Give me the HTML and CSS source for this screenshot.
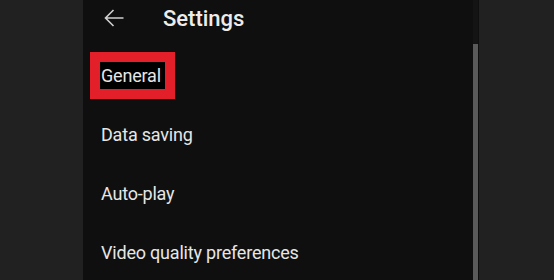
FILE: index.html
```html
<!DOCTYPE html>
<html lang="en">
<head>
    <meta charset="UTF-8">
    <meta name="viewport" content="width=device-width, initial-scale=1.0">
    <title>Settings</title>
    <link rel="stylesheet" href="styles.css">
</head>
<body>
    <div class="screen">
        <!-- settings panel -->
        <div class="panel">
            <div class="content">
                <div class="header">
                    <svg class="back" width="20" height="18" viewBox="0 0 20 18">
                        <path d="M19.5 9H1.5M9.5 1L1.5 9l8 8" fill="none" stroke="#d0d0d0" stroke-width="1.6"/>
                    </svg>
                    <span class="title">Settings</span>
                </div>
                <div class="list">
                    <div class="item"><span class="highlight">General</span></div>
                    <div class="item">Data saving</div>
                    <div class="item">Auto-play</div>
                    <div class="item">Video quality preferences</div>
                </div>
            </div>
            <div class="scrollbar">
                <div class="thumb"></div>
            </div>
        </div>
    </div>
</body>
</html>
```

FILE: styles.css
```css
body {
    margin: 0;
    font-family: Roboto, "Liberation Sans", sans-serif;
    background-color: #212121;
    overflow: hidden;
}

.screen {
    display: flex;
    height: 280px;
    padding-left: 83px;
}

.panel {
    display: flex;
    width: 396px;
    background-color: #0f0f0f;
}

.content {
    flex: 1;
}

.header {
    display: flex;
    align-items: flex-start;
    height: 42px;
    padding: 4px 0 0 21px;
}

.back {
    margin-top: 5px;
}

.title {
    margin-left: 39px;
    font-size: 22px;
    line-height: 30px;
    font-weight: 500;
    color: #ececec;
}

.item {
    padding: 16px 0 16px 18px;
    font-size: 18px;
    line-height: 27px;
    letter-spacing: -0.2px;
    color: #e6e6e6;
}

.highlight {
    display: inline-block;
    padding: 0 4px 0 1px;
    margin-left: -1px;
    background-color: #000;
    outline: 10px solid #e3202a;
}

.scrollbar {
    width: 5px;
    margin-right: 1px;
    background-color: #141414;
}

.thumb {
    margin-top: 44px;
    height: 236px;
    background-color: #5a5a5a;
}
```
